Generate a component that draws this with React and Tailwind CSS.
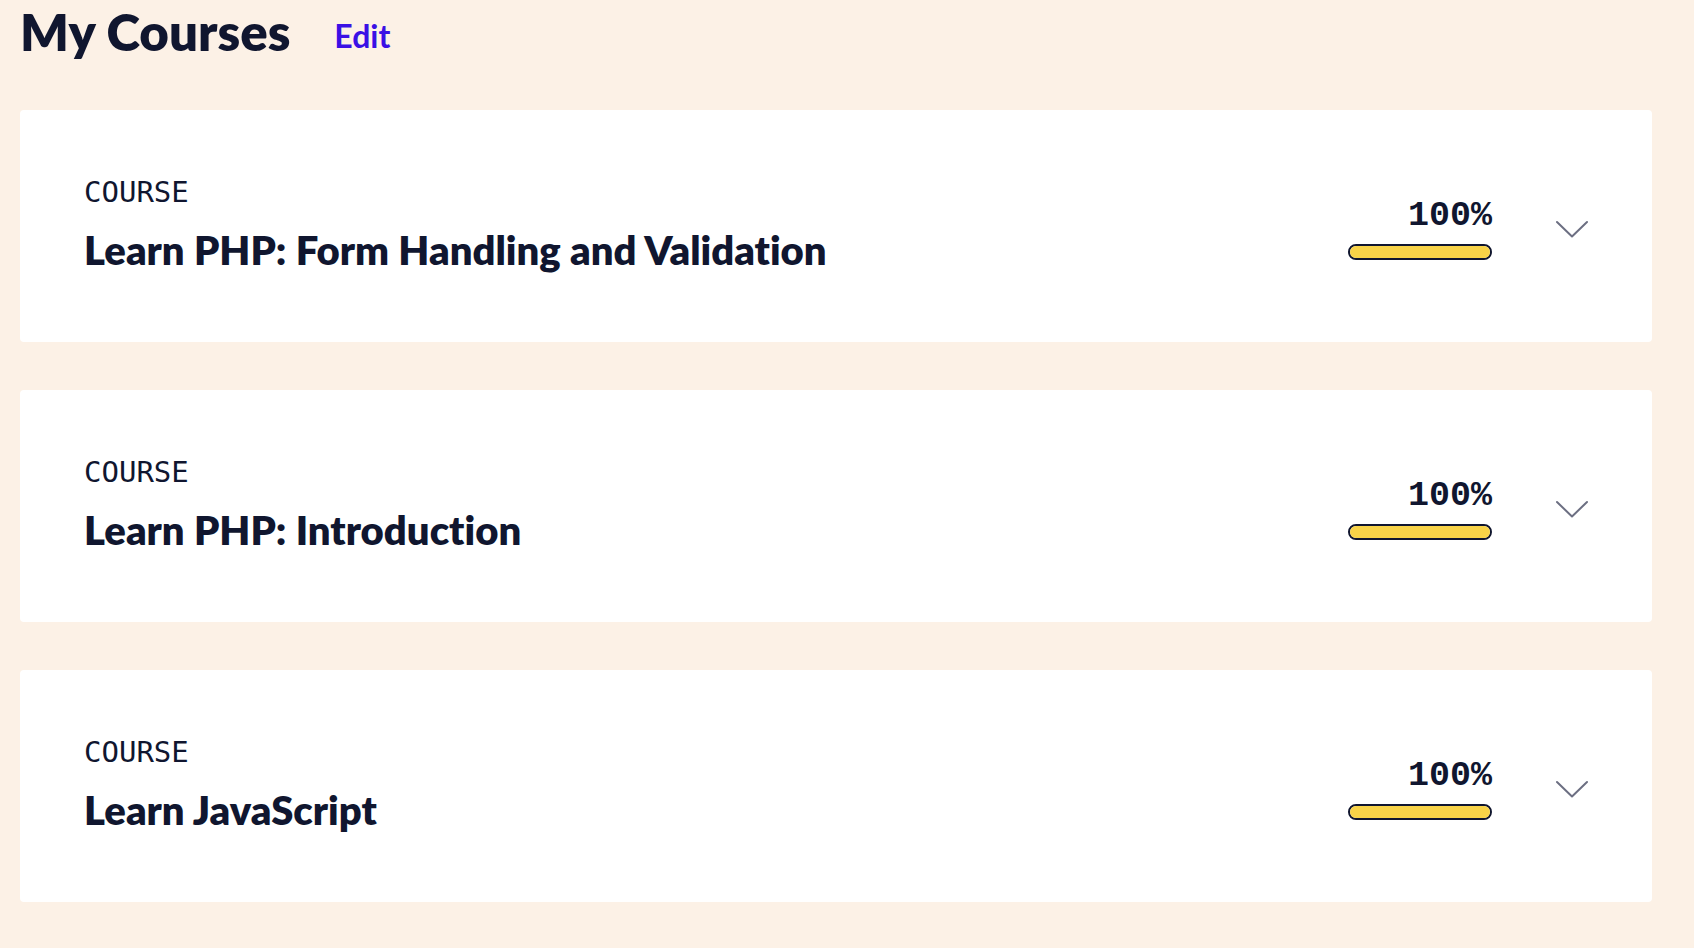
const courses = [
  { title: 'Learn PHP: Form Handling and Validation', progress: 100 },
  { title: 'Learn PHP: Introduction', progress: 100 },
  { title: 'Learn JavaScript', progress: 100 },
];

function CourseCard({ title, progress }) {
  return (
    <li className="flex items-center gap-16 rounded bg-white p-16">
      <div className="flex min-w-0 flex-1 flex-col gap-3">
        <p className="font-['DejaVu_Sans_Mono',monospace] text-[29px] leading-9">COURSE</p>
        <h2 className="text-[40px] leading-[56px] font-extrabold">{title}</h2>
      </div>
      <div className="flex w-36 flex-col items-end gap-1">
        <span className="font-['Liberation_Mono',monospace] text-[35px] leading-[48px] font-bold">
          {progress}%
        </span>
        <div
          role="progressbar"
          aria-label={title}
          aria-valuenow={progress}
          aria-valuemin={0}
          aria-valuemax={100}
          className="h-4 w-full overflow-hidden rounded-full border-2 border-[#10162f]"
        >
          <div className="h-full bg-[#f8d348]" style={{ width: `${progress}%` }} />
        </div>
      </div>
      <button type="button" aria-label={`Expand ${title}`} aria-expanded={false} className="text-[#6c6f82]">
        <svg viewBox="0 0 32 32" className="block size-8" fill="none" stroke="currentColor" strokeWidth="2" strokeLinecap="round" strokeLinejoin="round">
          <path d="M1 12 16 26.5 31 12" />
        </svg>
      </button>
    </li>
  );
}

export default function App() {
  return (
    <main className="min-h-screen bg-[#fcf1e6] pr-[42px] pb-12 pl-5 font-[Lato,sans-serif] text-[#10162f] [font-variant-ligatures:none]">
      <header className="flex items-end gap-11 pb-[46px]">
        <h1 className="text-[51px] leading-[64px] font-extrabold">My Courses</h1>
        <a href="#edit" className="text-[32px] leading-[56px] font-bold text-[#3a10e5]">Edit</a>
      </header>
      <ul className="flex flex-col gap-12">
        {courses.map((course) => (
          <CourseCard key={course.title} {...course} />
        ))}
      </ul>
    </main>
  );
}
